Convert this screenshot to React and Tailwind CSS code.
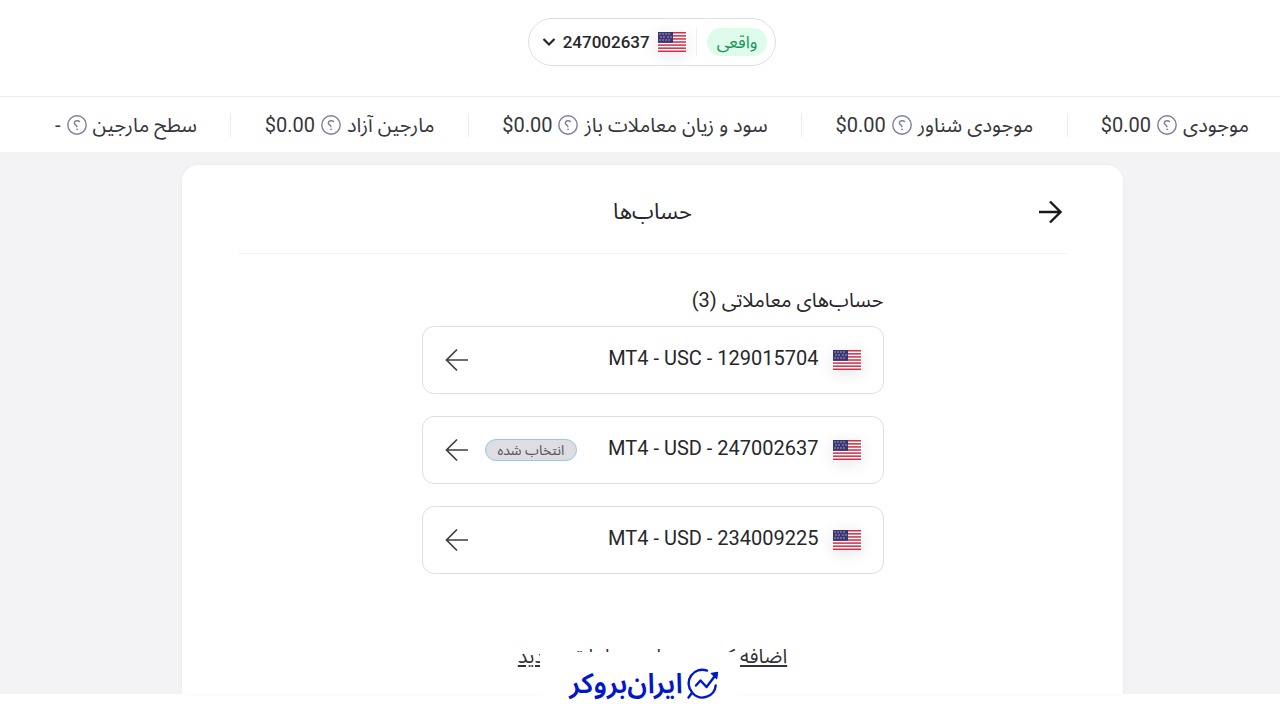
import { useState } from 'react'

const stats = [
  { label: 'موجودی', value: '$0.00' },
  { label: 'موجودی شناور', value: '$0.00' },
  { label: 'سود و زیان معاملات باز', value: '$0.00' },
  { label: 'مارجین آزاد', value: '$0.00' },
  { label: 'سطح مارجین', value: '-' },
]

const accounts = [
  { id: '129015704', currency: 'USC' },
  { id: '247002637', currency: 'USD' },
  { id: '234009225', currency: 'USD' },
]

const stripes = [0, 1, 2, 3, 4, 5, 6]
const stars = [
  [2, 2], [5, 2], [8, 2], [11, 2],
  [3, 5], [6, 5], [10, 5], [13, 5],
  [2, 8], [5, 8], [8, 8], [11, 8],
]

function Flag() {
  return (
    <svg viewBox="0 0 28 20" className="h-5 w-7 shrink-0 shadow-[0_3px_16px_rgba(40,40,70,0.12)]" aria-hidden="true">
      <rect width="28" height="20" fill="#fff" />
      {stripes.map((n) => (
        <rect key={n} y={n * 3.08} width="28" height="1.54" fill="#cf3249" />
      ))}
      <rect width="15" height="10.8" fill="#3a3570" />
      {stars.map(([x, y]) => (
        <circle key={`${x}-${y}`} cx={x} cy={y} r="0.7" fill="#c9c8df" />
      ))}
    </svg>
  )
}

function HelpIcon() {
  return (
    <svg viewBox="0 0 20 20" className="size-5" fill="none" stroke="#7d7f99" strokeWidth="1.4" strokeLinecap="round" aria-hidden="true">
      <circle cx="10" cy="10" r="9.2" />
      <path d="M12.6 6.6C11.2 5.2 7.6 5.5 7.3 7.8c-.2 2 2.6 2.1 2.6 4" />
      <circle cx="10" cy="14.3" r="0.5" fill="#7d7f99" strokeWidth="0.8" />
    </svg>
  )
}

function Arrow({ back, thick }) {
  return (
    <svg
      viewBox="0 0 24 24"
      className="size-6 shrink-0"
      fill="none"
      stroke={thick ? '#18181b' : '#3f3f42'}
      strokeWidth={thick ? 2.4 : 1.7}
      aria-hidden="true"
    >
      {back ? <path d="M0 12h22M11 1.5 21.5 12 11 22.5" /> : <path d="M23 12H2M12 1.5 1.5 12 12 22.5" />}
    </svg>
  )
}

function Stat({ label, value }) {
  return (
    <div className="flex items-center gap-1.5 text-xl leading-7 whitespace-nowrap text-[#36363a]">
      <span>{label}</span>
      <button type="button" aria-label={`راهنمای ${label}`}>
        <HelpIcon />
      </button>
      <span dir="ltr">{value}</span>
    </div>
  )
}

function AccountRow({ account, selected, onSelect }) {
  return (
    <button
      type="button"
      onClick={onSelect}
      className="flex h-17 w-full items-center justify-between rounded-xl border border-[#dfdfe3] px-[22px] text-[#27272a]"
    >
      <span className="flex items-center gap-3.5">
        <Flag />
        <span dir="ltr" className="pb-1 text-xl leading-7">
          MT4 - {account.currency} - {account.id}
        </span>
      </span>
      <span className="flex items-center gap-4">
        {selected && (
          <span className="rounded-full border border-[#93c8f5] bg-[#dedee2] px-3 text-sm leading-5 text-[#55555a]">
            انتخاب شده
          </span>
        )}
        <Arrow />
      </span>
    </button>
  )
}

function BrandMark() {
  return (
    <svg viewBox="0 0 32 32" className="size-8 shrink-0" fill="none" stroke="#0017cc" strokeWidth="2.4" strokeLinecap="round" strokeLinejoin="round" aria-hidden="true">
      <path d="M20 2.6A13.6 13.6 0 0 0 5.2 24.5L1.5 29.5" />
      <path d="M6 25.5A13.3 13.3 0 0 0 28.7 17.5" />
      <path d="m9 17.5 4.5-5 6 6.5L29 6.5" />
      <path d="m24.5 5.5 6-1-.8 6z" fill="#0017cc" strokeWidth="1.4" />
    </svg>
  )
}

export default function App() {
  const [selected, setSelected] = useState('247002637')

  return (
    <div dir="rtl" className="bg-white font-['Roboto','Noto_Sans_Arabic','DejaVu_Sans',sans-serif]">
      <header className="flex h-24 justify-center pt-[18px] pl-6">
        <button type="button" className="flex h-12 items-center rounded-full border border-[#dfdfe3] ps-2 pe-3 text-[#27272a]">
          <span className="rounded-full bg-[#defbeb] px-2.5 text-[17px] leading-7 text-[#16935a]">واقعی</span>
          <span className="mx-2.5 h-7 w-px bg-[#f1f1f3]" />
          <Flag />
          <span className="ms-2 text-[17px] leading-6 font-medium">{selected}</span>
          <svg viewBox="0 0 16 16" className="ms-1.5 size-4" fill="none" stroke="#27272a" strokeWidth="2.2" aria-hidden="true">
            <path d="m2.5 5 5.5 5.5L13.5 5" />
          </svg>
        </button>
      </header>

      <section className="flex h-14 items-center justify-between border-t border-[#ededf0] ps-[31px] pe-[55px]">
        {stats.map((stat, i) => (
          <div key={stat.label} className="contents">
            {i > 0 && <span className="h-6 w-px bg-[#ececef]" />}
            <Stat {...stat} />
          </div>
        ))}
      </section>

      <main className="bg-[#f3f3f5] ps-[157px] pe-[182px] pt-[13px]">
        <div className="rounded-t-2xl bg-white px-14 pb-6 shadow-[0_0_4px_rgba(0,0,0,0.04)]">
          <div className="flex h-[89px] items-center border-b border-[#f1f1f3] px-1 pt-1.5">
            <button type="button" aria-label="بازگشت">
              <Arrow back thick />
            </button>
            <h1 className="flex-1 pe-6 text-center text-[22px] leading-7 text-[#27272a]">حساب‌ها</h1>
          </div>

          <div className="mx-auto max-w-[462px] pt-8">
            <h2 className="text-xl leading-7 text-[#27272a]">حساب‌های معاملاتی (3)</h2>
            <div className="mt-3 flex flex-col gap-[22px]">
              {accounts.map((account) => (
                <AccountRow
                  key={account.id}
                  account={account}
                  selected={account.id === selected}
                  onSelect={() => setSelected(account.id)}
                />
              ))}
            </div>
            <div className="mt-17 text-center text-xl leading-7">
              <a href="#new-account" className="text-[#333336] underline underline-offset-2">
                اضافه کردن حساب معاملاتی جدید
              </a>
            </div>
          </div>
        </div>
      </main>

      <footer className="relative h-[26px]">
        <div className="absolute bottom-5 left-1/2 flex w-[200px] -translate-x-1/2 items-center justify-center gap-1 bg-white pt-4 pr-0 pb-0 pl-0">
          <div className="flex items-center gap-1 pl-2">
            <BrandMark />
            <span className="text-[28px] leading-8 font-semibold whitespace-nowrap text-[#0017cc]">ایران‌بروکر</span>
          </div>
        </div>
      </footer>
    </div>
  )
}
